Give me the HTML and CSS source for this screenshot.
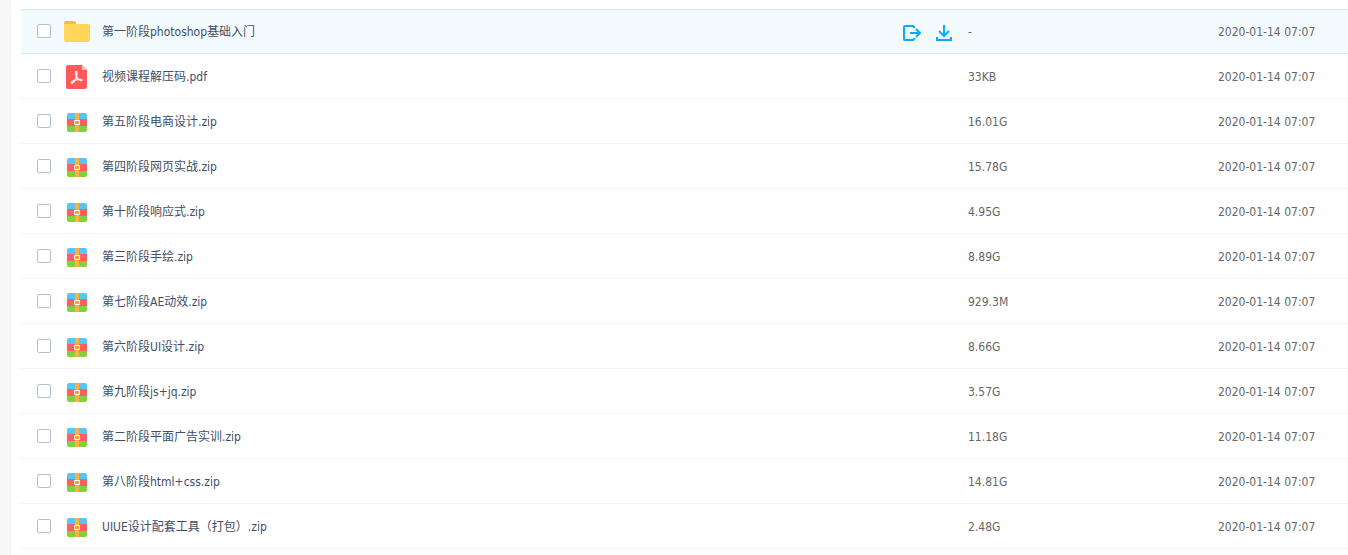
FILE: index.html
```
<!DOCTYPE html>
<html lang="zh-CN">
<head>
    <meta charset="UTF-8">
    <meta name="viewport" content="width=device-width, initial-scale=1.0">
    <title>全部文件</title>
    <link rel="stylesheet" href="styles.css">
</head>
<body>
    <svg class="sprite" aria-hidden="true">
        <symbol id="icon-folder" viewBox="0 0 26 26">
            <path fill="#eebe4d" d="M0 6V4a2 2 0 0 1 2-2h8a2 2 0 0 1 2 2v2z"/>
            <path fill="#ffd55a" d="M0 5h24a2 2 0 0 1 2 2v14a2 2 0 0 1-2 2H2a2 2 0 0 1-2-2z"/>
        </symbol>
        <symbol id="icon-pdf" viewBox="0 0 26 26">
            <path fill="#ff5a5a" d="M4 1h14l5 5v17a2 2 0 0 1-2 2H4a2 2 0 0 1-2-2V3a2 2 0 0 1 2-2z"/>
            <path fill="#ffbcbc" d="M18 1l5 5h-4a1 1 0 0 1-1-1z"/>
            <path fill="none" stroke="#fff" stroke-width="1.2" stroke-linejoin="round" stroke-linecap="round" d="M12.300 7.500c-1.200 0-.8 2 .2 4.500-.8 3-2.500 6-4 7-1.300.7-1.600-.7-.3-1.500 2-1.200 5-2.200 8-2.200 2 0 2.200 1.400.8 1.300-1.700-.2-3.500-2.200-4.500-4.600.7-2.500.7-4.500-.2-4.500z"/>
        </symbol>
        <symbol id="icon-zip" viewBox="0 0 26 26">
            <path fill="#55c7f7" d="M3 11V6a2 2 0 0 1 2-2h16a2 2 0 0 1 2 2v5z"/>
            <path fill="#ff5f5f" d="M3 10h20v7H3z"/>
            <path fill="#80d13b" d="M3 17h20v4a2 2 0 0 1-2 2H5a2 2 0 0 1-2-2z"/>
            <path fill="#ffb03f" d="M11 4h4v19h-4z"/>
            <path fill="#ff9d2e" stroke="#fff" d="M10.500 11.500h5v4h-5z"/>
        </symbol>
    </svg>

    <main class="file-list">
        <table class="files">
            <colgroup>
                <col class="col-check">
                <col class="col-name">
                <col class="col-actions">
                <col class="col-size">
                <col class="col-date">
            </colgroup>
            <tbody>
                <tr class="active">
                    <td class="check"><input type="checkbox" aria-labelledby="file1"></td>
                    <td><a href="#" class="name" id="file1"><svg class="icon"><use href="#icon-folder"/></svg><span>第一阶段photoshop基础入门</span></a></td>
                    <td>
                        <div class="actions">
                            <button type="button" aria-label="分享">
                                <svg viewBox="0 0 20 18"><path d="M12 5V4a1 1 0 0 0-1-1H3a1 1 0 0 0-1 1v12a1 1 0 0 0 1 1h8a1 1 0 0 0 1-1v-1M8 10h10M14 6l4 4-4 4"/></svg>
                            </button>
                            <button type="button" aria-label="下载">
                                <svg viewBox="0 0 20 18"><path d="M10 2v10M5 8l5 5 5-5M3 14v3h14v-3"/></svg>
                            </button>
                        </div>
                    </td>
                    <td>-</td>
                    <td>2020-01-14 07:07</td>
                </tr>
                <tr>
                    <td class="check"><input type="checkbox" aria-labelledby="file2"></td>
                    <td><a href="#" class="name" id="file2"><svg class="icon"><use href="#icon-pdf"/></svg><span>视频课程解压码.pdf</span></a></td>
                    <td></td>
                    <td>33KB</td>
                    <td>2020-01-14 07:07</td>
                </tr>
                <tr>
                    <td class="check"><input type="checkbox" aria-labelledby="file3"></td>
                    <td><a href="#" class="name" id="file3"><svg class="icon"><use href="#icon-zip"/></svg><span>第五阶段电商设计.zip</span></a></td>
                    <td></td>
                    <td>16.01G</td>
                    <td>2020-01-14 07:07</td>
                </tr>
                <tr>
                    <td class="check"><input type="checkbox" aria-labelledby="file4"></td>
                    <td><a href="#" class="name" id="file4"><svg class="icon"><use href="#icon-zip"/></svg><span>第四阶段网页实战.zip</span></a></td>
                    <td></td>
                    <td>15.78G</td>
                    <td>2020-01-14 07:07</td>
                </tr>
                <tr>
                    <td class="check"><input type="checkbox" aria-labelledby="file5"></td>
                    <td><a href="#" class="name" id="file5"><svg class="icon"><use href="#icon-zip"/></svg><span>第十阶段响应式.zip</span></a></td>
                    <td></td>
                    <td>4.95G</td>
                    <td>2020-01-14 07:07</td>
                </tr>
                <tr>
                    <td class="check"><input type="checkbox" aria-labelledby="file6"></td>
                    <td><a href="#" class="name" id="file6"><svg class="icon"><use href="#icon-zip"/></svg><span>第三阶段手绘.zip</span></a></td>
                    <td></td>
                    <td>8.89G</td>
                    <td>2020-01-14 07:07</td>
                </tr>
                <tr>
                    <td class="check"><input type="checkbox" aria-labelledby="file7"></td>
                    <td><a href="#" class="name" id="file7"><svg class="icon"><use href="#icon-zip"/></svg><span>第七阶段AE动效.zip</span></a></td>
                    <td></td>
                    <td>929.3M</td>
                    <td>2020-01-14 07:07</td>
                </tr>
                <tr>
                    <td class="check"><input type="checkbox" aria-labelledby="file8"></td>
                    <td><a href="#" class="name" id="file8"><svg class="icon"><use href="#icon-zip"/></svg><span>第六阶段UI设计.zip</span></a></td>
                    <td></td>
                    <td>8.66G</td>
                    <td>2020-01-14 07:07</td>
                </tr>
                <tr>
                    <td class="check"><input type="checkbox" aria-labelledby="file9"></td>
                    <td><a href="#" class="name" id="file9"><svg class="icon"><use href="#icon-zip"/></svg><span>第九阶段js+jq.zip</span></a></td>
                    <td></td>
                    <td>3.57G</td>
                    <td>2020-01-14 07:07</td>
                </tr>
                <tr>
                    <td class="check"><input type="checkbox" aria-labelledby="file10"></td>
                    <td><a href="#" class="name" id="file10"><svg class="icon"><use href="#icon-zip"/></svg><span>第二阶段平面广告实训.zip</span></a></td>
                    <td></td>
                    <td>11.18G</td>
                    <td>2020-01-14 07:07</td>
                </tr>
                <tr>
                    <td class="check"><input type="checkbox" aria-labelledby="file11"></td>
                    <td><a href="#" class="name" id="file11"><svg class="icon"><use href="#icon-zip"/></svg><span>第八阶段html+css.zip</span></a></td>
                    <td></td>
                    <td>14.81G</td>
                    <td>2020-01-14 07:07</td>
                </tr>
                <tr>
                    <td class="check"><input type="checkbox" aria-labelledby="file12"></td>
                    <td><a href="#" class="name" id="file12"><svg class="icon"><use href="#icon-zip"/></svg><span>UIUE设计配套工具（打包）.zip</span></a></td>
                    <td></td>
                    <td>2.48G</td>
                    <td>2020-01-14 07:07</td>
                </tr>
            </tbody>
        </table>
    </main>
</body>
</html>
```
FILE: styles.css
```
* {
    box-sizing: border-box;
}

body {
    margin: 0;
    padding-left: 11px;
    background-color: #f7f7f7;
    font-family: "DejaVu Sans Condensed", "Noto Sans CJK SC", sans-serif;
    font-size: 12px;
    line-height: 18px;
    color: #666;
}

.sprite {
    display: none;
}

.file-list {
    min-height: 100vh;
    padding: 9px 0 0 10px;
    background-color: #fff;
}

.files {
    width: 100%;
    table-layout: fixed;
    border-collapse: separate;
    border-spacing: 0;
}

.col-check {
    width: 43px;
}

.col-actions {
    width: 66px;
}

.col-size {
    width: 250px;
}

.col-date {
    width: 130px;
}

.files td {
    height: 45px;
    padding: 2px 0 0;
    border-bottom: 1px solid #f0f5fb;
    vertical-align: middle;
    white-space: nowrap;
}

.files .check {
    padding: 0;
}

.files .active td {
    background-color: #f3fbff;
    box-shadow: inset 0 1px #d4ebfa;
    border-bottom-color: #d4ebfa;
}

.files input {
    appearance: none;
    display: block;
    width: 14px;
    height: 14px;
    margin: 0 0 0 16px;
    border: 1px solid #b4c0d2;
    border-radius: 2px;
    background-color: #fff;
}

.files input:checked {
    background-color: #09aaff;
    border-color: #09aaff;
}

.name {
    display: flex;
    align-items: center;
    gap: 12px;
    color: #424e67;
    text-decoration: none;
}

.name:hover {
    color: #09aaff;
}

.icon {
    flex: none;
    width: 26px;
    height: 26px;
}

.actions {
    display: flex;
    gap: 12px;
}

.actions button {
    width: 20px;
    height: 18px;
    padding: 0;
    border: none;
    background: none;
    cursor: pointer;
}

.actions svg {
    display: block;
    width: 20px;
    height: 18px;
    fill: none;
    stroke: #09aaff;
    stroke-width: 2;
}
```
